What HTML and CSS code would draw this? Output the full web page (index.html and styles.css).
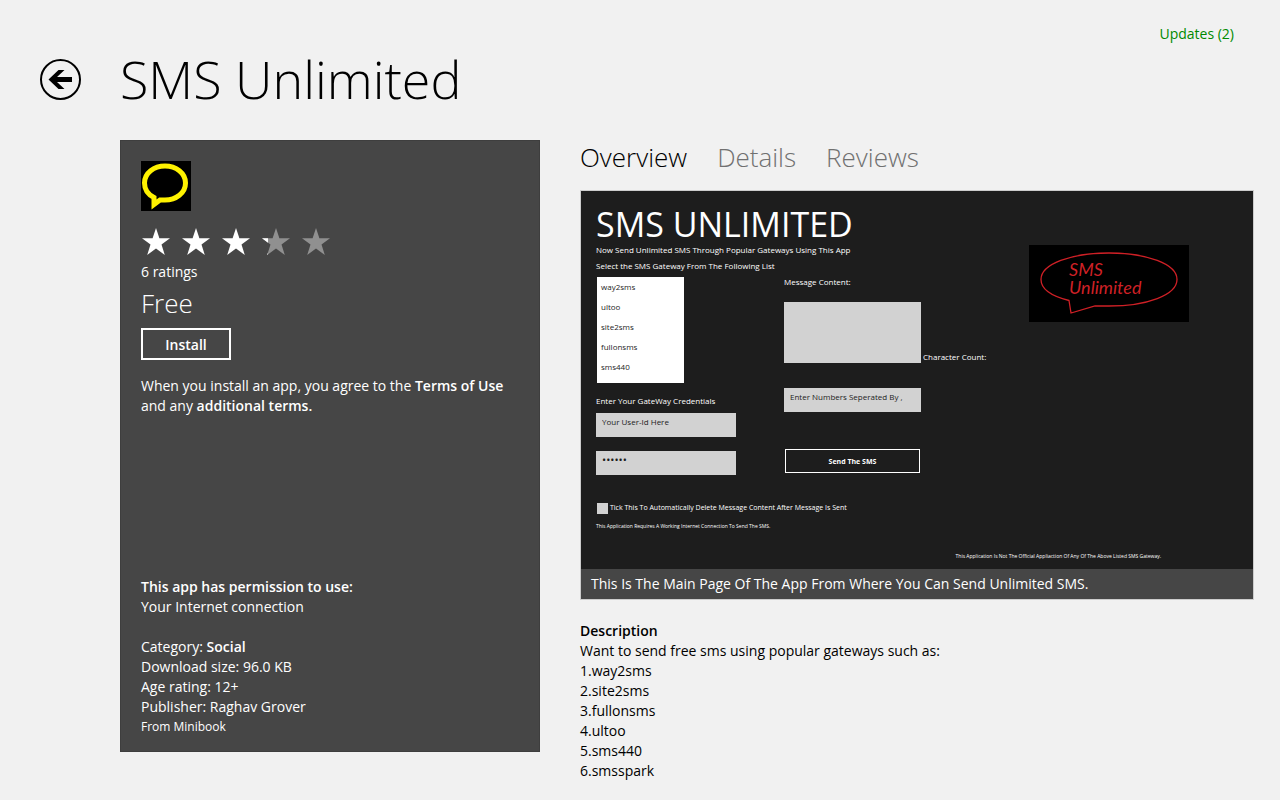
FILE: index.html
```html
<!DOCTYPE html>
<html lang="en">

<head>
    <meta charset="UTF-8">
    <meta name="viewport" content="width=device-width, initial-scale=1.0">
    <title>SMS Unlimited</title>
    <link rel="stylesheet" href="styles.css">
</head>

<body>
    <header class="top">
        <button class="back" aria-label="Back">
            <svg width="42" height="42" viewBox="0 0 42 42">
                <circle cx="20.5" cy="20.5" r="19.5" fill="none" stroke="#000" stroke-width="2" />
                <path d="M8.5 20.5L18.5 11H24.500L17 18H32V23H17L24.500 30H18.500Z" />
            </svg>
        </button>
        <h1>SMS Unlimited</h1>
        <a class="updates" href="#updates">Updates (2)</a>
    </header>

    <div class="content">
        <aside class="panel">
            <svg class="logo" width="50" height="50" viewBox="0 0 50 50">
                <rect width="50" height="50" fill="#000" />
                <path d="M13 36.500C6 33 3.500 27 3.500 22C3.500 12 13 5 24 5S44.500 12 44.500 22S35 39 24 39H19L13 43.500Z"
                    fill="none" stroke="#fff200" stroke-width="5" />
            </svg>
            <svg class="stars" width="190" height="30" viewBox="0 0 190 30" role="img" aria-label="3.1 out of 5 stars">
                <defs>
                    <path id="star" d="M15 1L18.400 11.300H29L20.500 17.600L23.800 28L15 21.500L6.200 28L9.500 17.600L1 11.300H11.600Z" />
                    <clipPath id="part"><rect width="7" height="30" /></clipPath>
                </defs>
                <g fill="#fff">
                    <use href="#star" />
                    <use href="#star" x="40" />
                    <use href="#star" x="80" />
                </g>
                <g fill="#909090">
                    <use href="#star" x="120" />
                    <use href="#star" x="160" />
                </g>
                <g transform="translate(120 0)"><use href="#star" fill="#fff" clip-path="url(#part)" /></g>
            </svg>
            <p>6 ratings</p>
            <p class="price">Free</p>
            <button class="install">Install</button>
            <p class="terms">When you install an app, you agree to the <a href="#terms">Terms of Use</a> and any <a
                    href="#additional">additional terms.</a></p>

            <div class="info">
                <p><b>This app has permission to use:</b></p>
                <p>Your Internet connection</p>
                <p class="category">Category: <b>Social</b></p>
                <p>Download size: 96.0 KB</p>
                <p>Age rating: 12+</p>
                <p>Publisher: Raghav Grover</p>
                <p class="from">From Minibook</p>
            </div>
        </aside>

        <main>
            <nav class="tabs">
                <a class="active" href="#overview">Overview</a>
                <a href="#details">Details</a>
                <a href="#reviews">Reviews</a>
            </nav>

            <figure class="preview">
                <div class="screen">
                    <div class="screen-top">
                        <div class="form">
                            <h2>SMS UNLIMITED</h2>
                            <p class="tagline">Now Send Unlimited SMS Through Popular Gateways Using This App</p>
                            <div class="columns">
                                <div class="column">
                                    <label class="hint" for="gateway">Select the SMS Gateway From The Following List</label>
                                    <select id="gateway" size="5">
                                        <option>way2sms</option>
                                        <option>ultoo</option>
                                        <option>site2sms</option>
                                        <option>fullonsms</option>
                                        <option>sms440</option>
                                    </select>
                                    <label class="credentials" for="user">Enter Your GateWay Credentials</label>
                                    <input id="user" type="text" value="Your User-Id Here">
                                    <input class="password" type="password" value="secret" aria-label="Password">
                                </div>
                                <div class="column message">
                                    <label for="message">Message Content:</label>
                                    <div class="message-row">
                                        <textarea id="message"></textarea>
                                        <span>Character Count:</span>
                                    </div>
                                    <input type="text" value="Enter Numbers Seperated By ," aria-label="Numbers">
                                    <button class="send">Send The SMS</button>
                                </div>
                            </div>
                        </div>
                        <svg class="banner" width="160" height="77" viewBox="0 0 160 77">
                            <rect width="160" height="77" fill="#000" />
                            <path d="M40 55.500C22 51 12 44 12 34.500C12 19 42 8 80 8S148 19 148 34.500S118 61 80 61H66L42 68Z"
                                fill="none" stroke="#cf2026" stroke-width="1.300" />
                            <text x="40" y="31">SMS</text>
                            <text x="40" y="49">Unlimited</text>
                        </svg>
                    </div>
                    <label class="tick"><input type="checkbox">Tick This To Automatically Delete Message Content After Message Is Sent</label>
                    <p class="note">This Application Requires A Working Internet Connection To Send The SMS.</p>
                    <p class="note disclaimer">This Application Is Not The Official Appliaction Of Any Of The Above Listed SMS Gateway.</p>
                </div>
                <figcaption>This Is The Main Page Of The App From Where You Can Send Unlimited SMS.</figcaption>
            </figure>

            <section class="description">
                <h3>Description</h3>
                <p>Want to send free sms using popular gateways such as:</p>
                <p>1.way2sms</p>
                <p>2.site2sms</p>
                <p>3.fullonsms</p>
                <p>4.ultoo</p>
                <p>5.sms440</p>
                <p>6.smsspark</p>
            </section>
        </main>
    </div>
</body>

</html>
```
FILE: styles.css
```css
* {
    box-sizing: border-box;
}

body {
    background: #f1f1f1;
    color: #000000;
    font-family: "Open Sans", "Noto Sans", sans-serif;
    font-size: 14px;
    line-height: 20px;
    margin: 0;
}

h1,
h2,
h3,
p,
figure {
    margin: 0;
}

a {
    color: inherit;
    text-decoration: none;
}

b {
    font-weight: 600;
}

button,
input,
select,
textarea {
    border: none;
    border-radius: 0;
    font-family: inherit;
    margin: 0;
    outline: none;
}

.top {
    align-items: flex-start;
    display: flex;
    padding: 24px 46px 0 40px;
}

.back {
    background: transparent;
    height: 42px;
    margin-top: 35px;
    padding: 0;
    width: 42px;
}

.back svg {
    display: block;
}

h1 {
    flex: 1;
    font-size: 52px;
    font-weight: 300;
    line-height: 70px;
    margin: 20px 0 2px 38px;
}

.updates {
    color: #008a00;
}

.content {
    align-items: flex-start;
    display: flex;
    gap: 40px;
    padding: 24px 26px 20px 120px;
}

.panel {
    background: #464646;
    border: 1px solid #3e3e3e;
    color: #ffffff;
    display: flex;
    flex: 0 0 420px;
    flex-direction: column;
    min-height: 612px;
    padding: 20px 20px 14px;
}

.logo {
    display: block;
}

.stars {
    display: block;
    margin: 16px 0 5px;
}

.price {
    font-size: 26px;
    font-weight: 300;
    line-height: 36px;
    margin: 3px 0 7px;
}

.install {
    background: transparent;
    border: 2px solid #ffffff;
    color: #ffffff;
    font-size: 14px;
    font-weight: 600;
    height: 32px;
    width: 90px;
}

.terms {
    margin-top: 16px;
}

.terms a {
    font-weight: 600;
}

.info {
    margin-top: auto;
}

.category {
    margin-top: 20px;
}

.from {
    font-size: 12px;
}

main {
    flex: 1;
    min-width: 0;
}

.tabs {
    color: #707070;
    display: flex;
    font-size: 26px;
    font-weight: 300;
    gap: 30px;
    line-height: 34px;
    margin-bottom: 16px;
}

.tabs .active {
    color: #000000;
}

.preview {
    background: #1d1d1d;
    border: 1px solid #cccccc;
    color: #ffffff;
}

.screen {
    font-size: 8px;
    line-height: 12px;
    padding: 13px 15px 7px;
}

.screen label,
.screen p {
    display: block;
    white-space: nowrap;
}

.screen-top {
    display: flex;
}

.form {
    flex: 0 0 433px;
}

.form h2 {
    font-size: 34px;
    font-weight: 400;
    line-height: 40px;
}

.columns {
    display: flex;
    margin-top: 4px;
}

.column {
    display: flex;
    flex: 0 0 188px;
    flex-direction: column;
    align-items: flex-start;
}

.column input {
    background: #d2d2d2;
    color: #1d1d1d;
    font-size: 8px;
    height: 24px;
    padding: 0 6px 8px;
    width: 140px;
}

.column select {
    background: #ffffff;
    font-size: 8px;
    height: 106px;
    margin: 5px 0 12px 1px;
    overflow: hidden;
    padding: 4px 0 0;
    width: 87px;
}

.column option {
    color: #1d1d1d;
    line-height: 20px;
    min-height: 20px;
    padding: 0 4px;
}

.credentials {
    margin-bottom: 6px;
}

.column .password {
    font-size: 11px;
    margin-top: 14px;
}

.message {
    padding-top: 16px;
}

.message-row {
    align-items: flex-end;
    display: flex;
    gap: 2px;
    margin: 14px 0 25px;
    white-space: nowrap;
}

.message textarea {
    background: #d2d2d2;
    display: block;
    height: 61px;
    resize: none;
    width: 137px;
}

.message input {
    width: 137px;
}

.send {
    background: transparent;
    border: 1px solid #ffffff;
    color: #ffffff;
    font-size: 7px;
    font-weight: 700;
    height: 24px;
    margin: 37px 0 0 1px;
    padding: 0;
    width: 135px;
}

.banner {
    margin-top: 41px;
}

.banner text {
    fill: #cf2026;
    font-family: Lato, sans-serif;
    font-size: 18px;
    font-style: italic;
}

.screen .tick {
    align-items: center;
    display: flex;
    font-size: 7px;
    gap: 2px;
    margin: 27px 0 6px 1px;
}

.tick input {
    appearance: none;
    background: #d2d2d2;
    height: 11px;
    width: 11px;
}

.note {
    font-size: 5px;
}

.disclaimer {
    margin: 18px 77px 0 0;
    text-align: right;
}

figcaption {
    background: #464646;
    line-height: 20px;
    padding: 5px 10px;
}

.description {
    margin-top: 21px;
}

.description h3 {
    font-size: 14px;
    font-weight: 600;
}
```
